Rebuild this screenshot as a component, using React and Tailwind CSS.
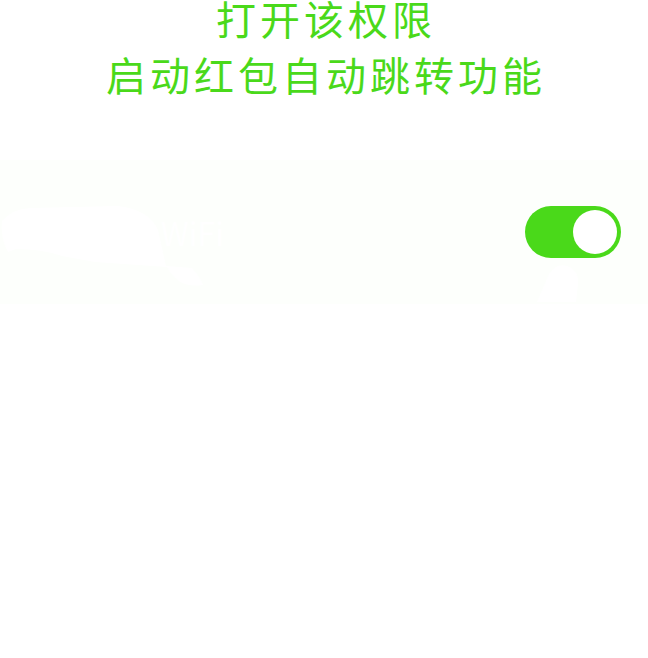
export default function App() {
  return (
    <main className="min-h-screen bg-white font-['Noto_Sans_CJK_SC',sans-serif]">
      <h1 className="flex flex-col gap-5 pl-1 text-center text-[40px] leading-9 font-normal tracking-widest text-[#4ad91a]">
        <span>打开该权限</span>
        <span>启动红包自动跳转功能</span>
      </h1>
      <section className="mt-17 flex h-36 items-center justify-between bg-[#fdfffc] pr-[27px]">
        <div className="relative flex h-full w-56 items-center justify-end">
          <svg
            className="absolute inset-0 h-full w-full"
            viewBox="0 0 224 144"
            fill="#fff"
            aria-hidden="true"
          >
            <path d="M2 61Q12 49 30 48L118 46Q150 50 158 70L166 106L192 108Q200 116 203 125Q178 129 167 107L95 102L62 96Q42 89 16 89L8 92Q0 78 2 61Z" />
          </svg>
          <label htmlFor="wifi" className="relative text-[32px] leading-9 text-white">
            WiFi
          </label>
        </div>
        <div className="relative h-[52px] w-24">
          <input
            id="wifi"
            type="checkbox"
            defaultChecked
            className="peer block h-full w-full appearance-none rounded-full bg-gray-300 checked:bg-[#4ad91a]"
          />
          <span className="pointer-events-none absolute top-1 left-1 size-11 rounded-full bg-white peer-checked:left-12" />
          <svg
            className="absolute top-full left-0 h-11 w-24"
            viewBox="0 0 96 44"
            fill="#fff"
            aria-hidden="true"
          >
            <path d="M12 44L24 16Q31 5 42 8Q54 12 53 26L51 44Z" />
          </svg>
        </div>
      </section>
    </main>
  );
}
